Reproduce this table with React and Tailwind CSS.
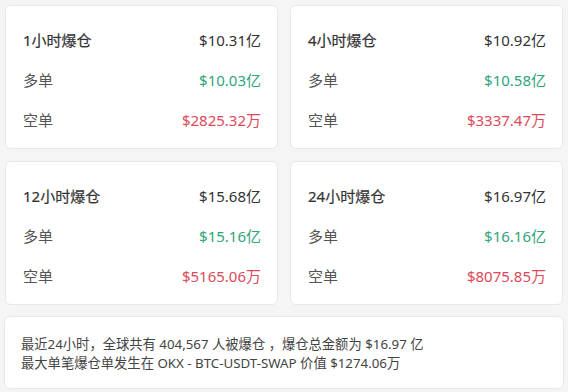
import React from 'react';

const cards = [
    { title: '1小时爆仓', total: '$10.31亿', long: '$10.03亿', short: '$2825.32万' },
    { title: '4小时爆仓', total: '$10.92亿', long: '$10.58亿', short: '$3337.47万' },
    { title: '12小时爆仓', total: '$15.68亿', long: '$15.16亿', short: '$5165.06万' },
    { title: '24小时爆仓', total: '$16.97亿', long: '$16.16亿', short: '$8075.85万' },
];

const Card = ({ title, total, long, short }) => (
    <div className="bg-white border border-[#e9e9e9] rounded-md pt-[14px] pb-[8px] pl-[17px] pr-[16px]">
        <div className="flex items-center justify-between h-10 text-[15px] text-[#333]">
            <span className="[-webkit-text-stroke:0.2px_#333]">{title}</span>
            <span>{total}</span>
        </div>
        <div className="flex items-center justify-between h-10 text-[15px]">
            <span className="text-[#555]">多单</span>
            <span className="text-[#2fa57c]">{long}</span>
        </div>
        <div className="flex items-center justify-between h-10 text-[15px]">
            <span className="text-[#555]">空单</span>
            <span className="text-[#dc4a5a]">{short}</span>
        </div>
    </div>
);

const App = () => {
    return (
        <div className="w-[568px] h-[392px] bg-[#f5f5f5] px-[5px] pt-[5px] font-['Noto_Sans','Noto_Sans_CJK_SC',sans-serif]">
            <div className="grid grid-cols-2 gap-3">
                {cards.map(c => (
                    <Card key={c.title} {...c} />
                ))}
            </div>

            {/* Summary */}
            <div className="mt-[11px] -mx-px bg-white border border-[#e9e9e9] rounded-md pt-[18px] pb-[15px] px-[16px] text-[13.3px] leading-[19px] text-[#444]">
                <p>最近24小时，全球共有 404,567 人被爆仓 ，爆仓总金额为 $16.97 亿</p>
                <p>最大单笔爆仓单发生在 OKX - BTC-USDT-SWAP 价值 $1274.06万</p>
            </div>
        </div>
    );
};

export default App;
